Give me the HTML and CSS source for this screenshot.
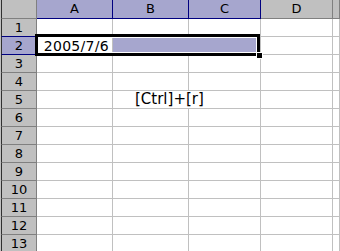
FILE: index.html
```html
<!DOCTYPE html>
<html>
<head>
<meta charset="utf-8">
<link rel="stylesheet" href="styles.css">
</head>
<body>
<div class="sheet">
  <div class="grid">
    <div class="corner"></div>
    <div class="ch sel">A</div>
    <div class="ch sel">B</div>
    <div class="ch sel">C</div>
    <div class="ch">D</div>
    <div class="ch"></div>

    <div class="rh sel-before">1</div><div class="c"></div><div class="c"></div><div class="c"></div><div class="c"></div><div class="c"></div>
    <div class="rh sel">2</div><div class="c date">2005/7/6</div><div class="c span2 fill"></div><div class="c"></div><div class="c"></div>
    <div class="rh">3</div><div class="c"></div><div class="c"></div><div class="c"></div><div class="c"></div><div class="c"></div>
    <div class="rh">4</div><div class="c"></div><div class="c"></div><div class="c"></div><div class="c"></div><div class="c"></div>
    <div class="rh">5</div><div class="c"></div><div class="c span2 note">[Ctrl]+[r]</div><div class="c"></div><div class="c"></div>
    <div class="rh">6</div><div class="c"></div><div class="c"></div><div class="c"></div><div class="c"></div><div class="c"></div>
    <div class="rh">7</div><div class="c"></div><div class="c"></div><div class="c"></div><div class="c"></div><div class="c"></div>
    <div class="rh">8</div><div class="c"></div><div class="c"></div><div class="c"></div><div class="c"></div><div class="c"></div>
    <div class="rh">9</div><div class="c"></div><div class="c"></div><div class="c"></div><div class="c"></div><div class="c"></div>
    <div class="rh">10</div><div class="c"></div><div class="c"></div><div class="c"></div><div class="c"></div><div class="c"></div>
    <div class="rh">11</div><div class="c"></div><div class="c"></div><div class="c"></div><div class="c"></div><div class="c"></div>
    <div class="rh">12</div><div class="c"></div><div class="c"></div><div class="c"></div><div class="c"></div><div class="c"></div>
    <div class="rh">13</div><div class="c"></div><div class="c"></div><div class="c"></div><div class="c"></div><div class="c"></div>
  </div>
  <div class="selection"><span class="handle"></span></div>
</div>
</body>
</html>
```

FILE: styles.css
```css
* { box-sizing: border-box; }
html, body {
  margin: 0;
  padding: 0;
  width: 340px;
  height: 251px;
  overflow: hidden;
  background: #fff;
}
.sheet {
  position: relative;
  width: 340px;
  height: 251px;
  padding-left: 1px;
  background: #c0c0c0;
  overflow: hidden;
  font-family: "DejaVu Sans", sans-serif;
}
.grid {
  display: grid;
  grid-template-columns: 36px 76px 76px 72px 72px 1fr;
  grid-template-rows: 19px repeat(13, 18px);
  background: #fff;
}
.corner, .ch, .rh {
  background: #c0c0c0;
  border-right: 1px solid #808080;
  border-bottom: 1px solid #808080;
  font-size: 13px;
  line-height: 16px;
  color: #000;
  text-align: center;
  padding-top: 1px;
}
.corner, .rh {
  border-left: 1px solid #303030;
}
.ch.sel {
  background: #a6a6ce;
  border-right-color: #000080;
  border-bottom-color: #000080;
}
.rh.sel-before { border-bottom-color: #000080; }
.rh.sel {
  background: #a6a6ce;
  border-bottom-color: #000080;
  border-right-color: #000080;
}
.c {
  background: #fff;
  border-right: 1px solid #c0c0c0;
  border-bottom: 1px solid #c0c0c0;
  font-size: 14px;
  line-height: 17px;
  white-space: nowrap;
  color: #000;
}
.span2 { grid-column: span 2; }
.date {
  text-align: right;
  padding-right: 3px;
  padding-top: 1px;
  letter-spacing: 0.3px;
}
.fill { background: #a6a6ce; }
.note {
  padding-left: 22px;
  font-size: 15px;
  padding-top: 0;
}
.selection {
  position: absolute;
  left: 35px;
  top: 34px;
  width: 225px;
  height: 22px;
  border: 3px solid #000;
  box-shadow: inset 0 0 0 1px #fff;
}
.handle {
  position: absolute;
  right: -6px;
  bottom: -6px;
  width: 7px;
  height: 7px;
  background: #000;
  border: 1px solid #fff;
}
```
